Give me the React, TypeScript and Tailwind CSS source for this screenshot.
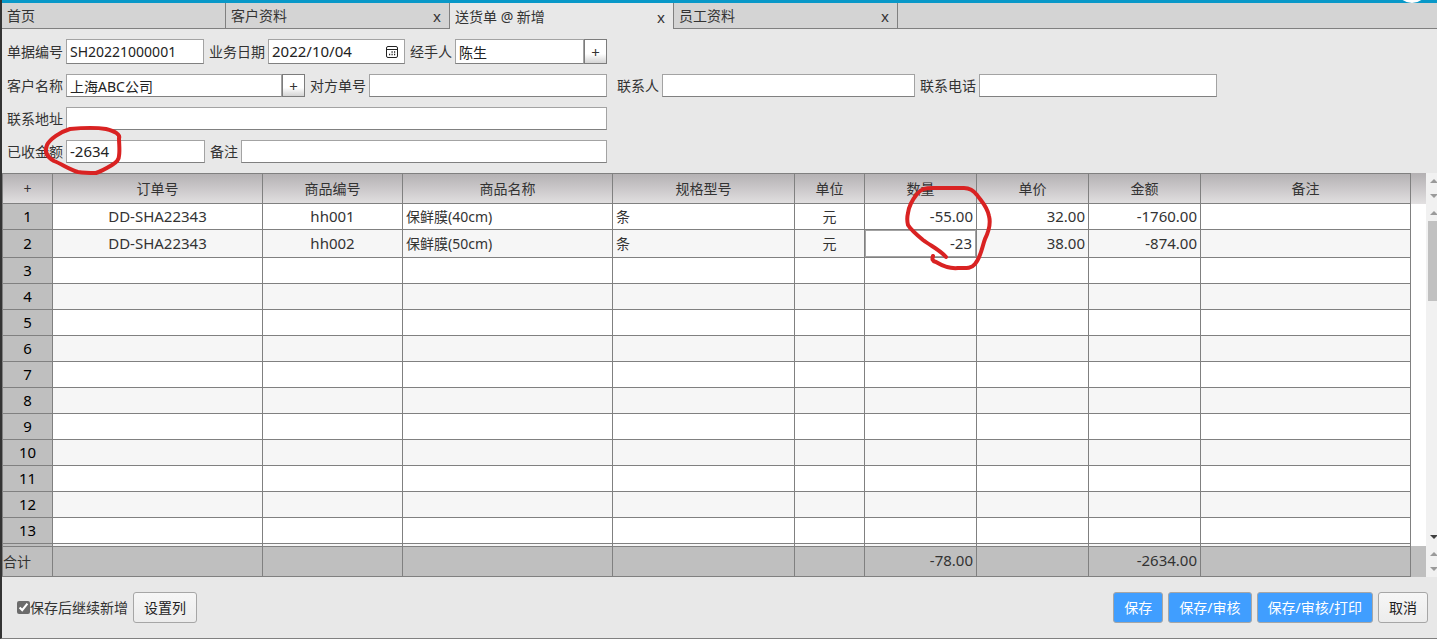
import { useState } from "react"
import type { InputHTMLAttributes, ReactNode } from "react"
import clsx from "clsx"

const tabs = [
  { title: "首页", closable: false },
  { title: "客户资料", closable: true },
  { title: "送货单 @ 新增", closable: true },
  { title: "员工资料", closable: true },
]

const columns = [
  { key: "order", title: "订单号", col: "w-[210px]", align: "text-center" },
  { key: "code", title: "商品编号", col: "w-[140px]", align: "text-center" },
  { key: "name", title: "商品名称", col: "w-[210px]", align: "text-left" },
  { key: "spec", title: "规格型号", col: "w-[182px]", align: "text-left" },
  { key: "unit", title: "单位", col: "w-[70px]", align: "text-center" },
  { key: "qty", title: "数量", col: "w-28", align: "text-right" },
  { key: "price", title: "单价", col: "w-28", align: "text-right" },
  { key: "amount", title: "金额", col: "w-28", align: "text-right" },
  { key: "remark", title: "备注", col: "", align: "text-left" },
]

const items: Record<string, string>[] = [
  { order: "DD-SHA22343", code: "hh001", name: "保鲜膜(40cm)", spec: "条", unit: "元", qty: "-55.00", price: "32.00", amount: "-1760.00" },
  { order: "DD-SHA22343", code: "hh002", name: "保鲜膜(50cm)", spec: "条", unit: "元", qty: "-23", price: "38.00", amount: "-874.00" },
]

const totals: Record<string, string> = { qty: "-78.00", amount: "-2634.00" }

const ROW_COUNT = 13
const EDITING_ROW = 1

type FieldProps = InputHTMLAttributes<HTMLInputElement> & {
  id: string
  label: string
  width: string
  addon?: ReactNode
}

function Field({ id, label, width, addon, className, ...rest }: FieldProps) {
  return (
    <div className="flex items-center gap-[3px]">
      <label htmlFor={id} className="whitespace-nowrap">{label}</label>
      <div className={clsx("flex h-full", width)}>
        <div className="flex min-w-0 flex-1 items-center border border-[#a3a3a3] border-b-[#808080] bg-white">
          <input
            id={id}
            className={clsx("h-full w-full min-w-0 bg-transparent px-[3px] text-[#222] outline-none", className)}
            {...rest}
          />
          {addon === "calendar" && <CalendarButton />}
        </div>
        {addon === "plus" && (
          <button
            type="button"
            aria-label={"选择" + label}
            className="flex w-[23px] shrink-0 items-center justify-center border border-[#7c7c7c] bg-linear-to-b from-white from-60% to-[#d4d4d4] text-[15px]"
          >
            +
          </button>
        )}
      </div>
    </div>
  )
}

function CalendarButton() {
  return (
    <button type="button" aria-label="选择日期" className="mr-[5px] shrink-0">
      <svg width="14" height="14" viewBox="0 0 14 14" fill="none" stroke="#222">
        <rect x="1.5" y="1.5" width="11" height="11" rx="1.5" />
        <path d="M1.5 4.5h11" />
        <path d="M6.5 7h1.2M9 7h1.2M4 9.5h1.2M6.5 9.5h1.2M9 9.5h1.2" strokeWidth="1.4" />
      </svg>
    </button>
  )
}

function Arrow({ down = false, dark = false }: { down?: boolean; dark?: boolean }) {
  return (
    <svg width="11" height="15" viewBox="0 0 11 15" className="block shrink-0" fill={dark ? "#404040" : "#9a9a9a"}>
      <path d={down ? "M4 6h8l-4 4z" : "M4 10h8l-4-4z"} />
    </svg>
  )
}

function Cols() {
  return (
    <colgroup>
      <col className="w-[51px]" />
      {columns.map((c) => (
        <col key={c.key} className={c.col} />
      ))}
    </colgroup>
  )
}

// one horizontal band of the grid: the table plus its scrollbar strip
function Band({ className, bg, bar, children }: { className?: string; bg: string; bar: ReactNode; children: ReactNode }) {
  return (
    <div className={clsx("flex", className)}>
      <div className={clsx("min-w-0 flex-1 overflow-hidden pr-[15px]", bg)}>
        <table className="w-full table-fixed border-separate border-spacing-0">
          <Cols />
          {children}
        </table>
      </div>
      <div className="flex w-[11px] shrink-0 flex-col bg-[#f1f1f1]">{bar}</div>
    </div>
  )
}

const line = "border-r border-b border-[#808080]"

function Row({ index }: { index: number }) {
  const item = items[index] ?? {}
  const editing = index === EDITING_ROW
  const [qty, setQty] = useState(item.qty ?? "")

  return (
    <tr className={clsx(editing ? "h-7" : "h-[26px]", index % 2 ? "bg-[#f6f6f6]" : "bg-white")}>
      <th scope="row" className={clsx(line, "border-l bg-[#bfbfbf] pb-0.5 font-normal text-black")}>
        {index < ROW_COUNT && index + 1}
      </th>
      {columns.map((c) => {
        if (editing && c.key === "qty") {
          return (
            <td key={c.key} className={line}>
              <input
                aria-label={c.title}
                value={qty}
                onChange={(e) => setQty(e.target.value)}
                className="block h-[27px] w-full border border-[#a3a3a3] bg-white px-[3px] pb-0.5 text-right outline-none"
              />
            </td>
          )
        }
        const cjk = /[\u4e00-\u9fff]/.test(item[c.key] ?? "")
        return (
          <td key={c.key} className={clsx(line, "px-[3px]", c.align, cjk ? "text-sm" : "pb-0.5")}>
            {item[c.key]}
          </td>
        )
      })}
    </tr>
  )
}

// red pen marks over the negative figures
function PenMarks() {
  return (
    <svg
      className="pointer-events-none absolute top-0 left-0"
      width="1000"
      height="280"
      viewBox="2 0 1000 280"
      fill="none"
      stroke="#d92222"
      strokeWidth="4"
      strokeLinecap="round"
      strokeLinejoin="round"
    >
      <path d="M119 139C121 134 114 131 106 129C94 127 80 128 70 129C60 132 50 139 47 145C44 152 47 157 54 161C62 164 70 170 78 172C85 173 91 173 96 173C102 171 107 168 112 165C117 162 119 159 119 156C120 150 119 144 119 138" />
      <path d="M946 257C940 250 931 246 923 240C917 235 911 230 908 225C907 221 907 217 908 213C909 205 913 199 917 194C921 189 925 188 933 188L964 188C970 188 974 191 977 195C981 201 987 206 989 216C991 224 988 233 985 239C982 247 981 257 975 264C971 269 965 268 958 268C948 269 941 265 936 262C932 261 932 259 933 256" />
    </svg>
  )
}

function ActionButton({ primary = false, children }: { primary?: boolean; children: ReactNode }) {
  return (
    <button
      type="button"
      className={clsx(
        "h-[31px] rounded-[3px] border border-[#a6a6a6] px-2.5 whitespace-nowrap",
        primary ? "bg-[#409eff] text-white" : "bg-linear-to-b from-[#f6f6f6] to-[#ececec] text-[#222]"
      )}
    >
      {children}
    </button>
  )
}

export default function App() {
  const [active, setActive] = useState(2)

  return (
    <div className="relative flex h-screen flex-col overflow-hidden border-b border-l-2 border-b-[#808080] border-l-[#333] bg-[#e8e8e8] font-['Noto_Sans','Noto_Sans_CJK_SC',sans-serif] text-sm leading-5 text-[#333]">
      <header className="relative h-[3px] shrink-0 overflow-hidden bg-[#0898c8]">
        <span className="absolute right-[9px] bottom-0 size-8 rounded-full bg-white" />
      </header>

      <nav className="flex h-[26px] shrink-0 bg-[#d4d4d4]">
        {tabs.map((tab, i) => (
          <div
            key={tab.title}
            className={clsx(
              "flex w-56 items-center justify-between border-[#808080] pr-2 pl-[5px]",
              i === active ? "border-r bg-[#e8e8e8] pt-px" : "border-r border-b"
            )}
          >
            <button type="button" onClick={() => setActive(i)}>{tab.title}</button>
            {tab.closable && <button type="button" aria-label={"关闭" + tab.title} className="text-[15px]">x</button>}
          </div>
        ))}
        <div className="flex-1 border-b border-[#808080]" />
      </nav>

      <form className="flex shrink-0 flex-col gap-2.5 px-[5px] py-2.5" onSubmit={(e) => e.preventDefault()}>
        <div className="flex h-[25px] gap-[5px]">
          <Field id="billNo" label="单据编号" width="w-[138px]" defaultValue="SH20221000001" />
          <Field id="billDate" label="业务日期" width="w-[137px]" defaultValue="2022/10/04" className="pb-0.5 text-[15px]" addon="calendar" />
          <Field id="handler" label="经手人" width="w-[152px]" defaultValue="陈生" addon="plus" />
        </div>
        <div className="flex h-[23px] gap-2.5">
          <div className="flex gap-[5px]">
            <Field id="customer" label="客户名称" width="w-[239px]" defaultValue="上海ABC公司" addon="plus" />
            <Field id="otherNo" label="对方单号" width="w-[238px]" />
          </div>
          <div className="flex gap-[5px]">
            <Field id="contact" label="联系人" width="w-[253px]" />
            <Field id="phone" label="联系电话" width="w-[238px]" />
          </div>
        </div>
        <div className="flex h-[23px]">
          <Field id="address" label="联系地址" width="w-[541px]" />
        </div>
        <div className="flex h-[23px] gap-[5px]">
          <Field id="received" label="已收金额" width="w-[139px]" defaultValue="-2634" className="pb-0.5 text-[15px]" />
          <Field id="remark" label="备注" width="w-[366px]" />
        </div>
      </form>

      <main className="flex min-h-0 flex-1 flex-col">
        <Band className="shrink-0" bg="bg-linear-to-b from-[#b3b0b2] to-[#e2e0e1]" bar={<><Arrow /><Arrow down /></>}>
          <thead>
            <tr className="h-[31px]">
              <th className={clsx(line, "border-t border-l font-normal")}>
                <button type="button" aria-label="添加行">+</button>
              </th>
              {columns.map((c) => (
                <th key={c.key} scope="col" className={clsx(line, "border-t font-normal")}>{c.title}</th>
              ))}
            </tr>
          </thead>
        </Band>

        <Band
          className="min-h-0 flex-1 text-[15px]"
          bg="bg-white"
          bar={
            <div className="flex flex-1 flex-col pt-px pb-0.5">
              <Arrow />
              <div className="mt-px ml-0.5 h-20 shrink-0 bg-[#c1c1c1]" />
              <div className="flex-1" />
              <Arrow down dark />
            </div>
          }
        >
          <tbody>
            {Array.from({ length: ROW_COUNT + 1 }, (_, i) => (
              <Row key={i} index={i} />
            ))}
          </tbody>
        </Band>

        <Band className="shrink-0" bg="bg-[#bfbfbf]" bar={<><Arrow /><Arrow down /></>}>
          <tfoot>
            <tr className="h-[31px]">
              <th scope="row" className={clsx(line, "border-t border-l text-left font-normal")}>合计</th>
              {columns.map((c) => (
                <td key={c.key} className={clsx(line, "border-t px-[3px] pb-1 text-[15px]", c.align)}>{totals[c.key]}</td>
              ))}
            </tr>
          </tfoot>
        </Band>
      </main>

      <footer className="flex shrink-0 items-center gap-[5px] py-[15px] pr-[9px] pl-[15px]">
        <label className="flex items-center whitespace-nowrap">
          <input type="checkbox" defaultChecked className="size-[13px] accent-[#6b6b6b]" />
          保存后继续新增
        </label>
        <ActionButton>设置列</ActionButton>
        <div className="flex-1" />
        <ActionButton primary>保存</ActionButton>
        <ActionButton primary>保存/审核</ActionButton>
        <ActionButton primary>保存/审核/打印</ActionButton>
        <ActionButton>取消</ActionButton>
      </footer>

      <PenMarks />
    </div>
  )
}
